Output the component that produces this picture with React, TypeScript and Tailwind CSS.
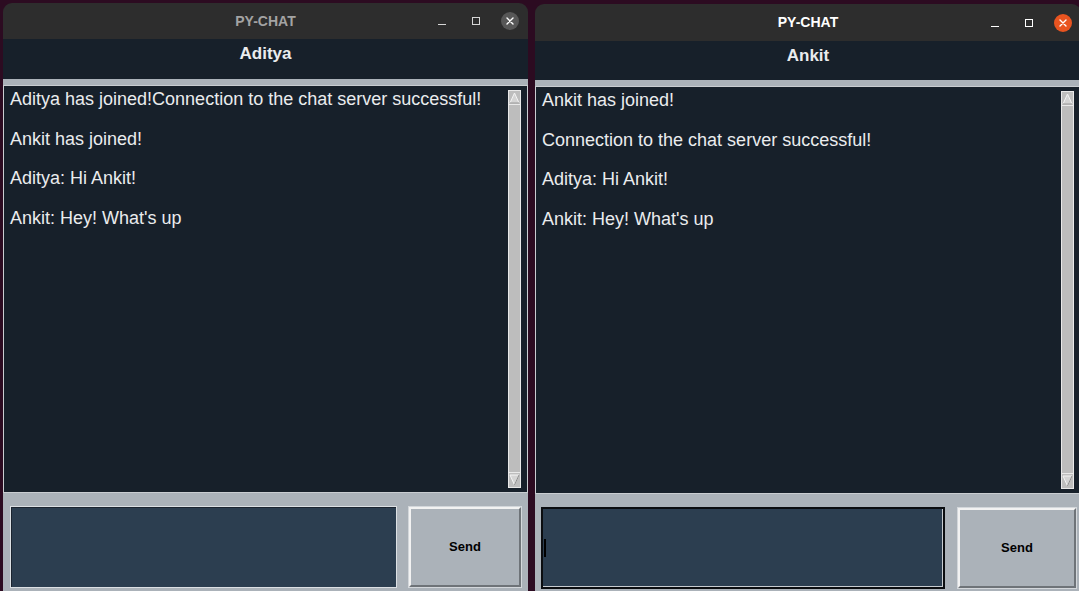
import React from "react";

const FONT = { fontFamily: '"Liberation Sans", Arial, Helvetica, sans-serif' };

function ScrollBar() {
  return (
    <div className="w-[13px] shrink-0 mt-[4px] mb-[4px] mr-[6px] flex flex-col bg-[#bebebe] border border-[#e9e9e9]">
      <div className="h-[14px] flex items-center justify-center border-b border-[#e9e9e9]">
        <svg width="11" height="12" viewBox="0 0 11 12">
          <polygon points="5.5,1 10,11 1,11" fill="#d4d4d4" stroke="#f4f4f4" strokeWidth="1" />
          <line x1="1" y1="11" x2="10" y2="11" stroke="#8a8a8a" strokeWidth="1" />
        </svg>
      </div>
      <div className="flex-1 bg-[#bdbdbd] border-b border-[#e9e9e9]" />
      <div className="h-[14px] flex items-center justify-center">
        <svg width="11" height="12" viewBox="0 0 11 12">
          <polygon points="1,1 10,1 5.5,11" fill="#d4d4d4" stroke="#f4f4f4" strokeWidth="1" />
          <line x1="5.5" y1="11" x2="10" y2="1" stroke="#8a8a8a" strokeWidth="1" />
        </svg>
      </div>
    </div>
  );
}

function TitleBar({ focused, h }: { focused: boolean; h: string }) {
  const icon = focused ? "#ffffff" : "#d6d6d6";
  return (
    <div
      className={`${h} shrink-0 bg-[#2d2d2d] rounded-t-[9px] grid grid-cols-[1fr_auto_1fr] items-center`}
    >
      <div />
      <div
        className={`text-[14px] font-bold ${focused ? "text-white" : "text-[#a3a3a3]"}`}
        style={FONT}
      >
        PY-CHAT
      </div>
      <div className="flex items-center justify-end pr-[9px]">
        <div className="w-[8px] h-[8px] flex items-end">
          <div className="w-[8px] h-[1px]" style={{ background: icon }} />
        </div>
        <div className="w-[8px] h-[8px] ml-[26px] border" style={{ borderColor: icon }} />
        <div
          className={`w-[18px] h-[18px] ml-[21px] rounded-full flex items-center justify-center ${
            focused ? "bg-[#e95420]" : "bg-[#575757]"
          }`}
        >
          <svg width="8" height="8" viewBox="0 0 8 8">
            <path d="M1 1 L7 7 M7 1 L1 7" stroke="#ffffff" strokeWidth="1.4" strokeLinecap="round" />
          </svg>
        </div>
      </div>
    </div>
  );
}

function ChatWindow({
  name,
  messages,
  focused,
  width,
  top,
  titleH,
  headerH,
  inputW,
  btnW,
  gapBtn,
  padL,
}: {
  name: string;
  messages: string[];
  focused: boolean;
  width: string;
  top: string;
  titleH: string;
  headerH: string;
  inputW: string;
  btnW: string;
  gapBtn: string;
  padL: string;
}) {
  return (
    <div className={`${width} ${top} shrink-0 h-[620px] flex flex-col`} style={FONT}>
      <TitleBar focused={focused} h={titleH} />
      <div className={`${headerH} shrink-0 bg-[#17202a] flex justify-center pt-[5px]`}>
        <div className="text-[17px] leading-[20px] font-bold text-[#eaecee]">{name}</div>
      </div>
      <div className="h-[6px] shrink-0 bg-[#abb2b9]" />
      <div className="h-[408px] shrink-0 bg-[#17202a] border border-[#c9cdd1] flex">
        <div className="flex-1 pl-[6px] pt-[4px] text-[18px] leading-[19.75px] text-[#eaecee]">
          {messages.map((m, i) => (
            <div key={i} className="h-[39.5px] whitespace-nowrap">
              {m}
            </div>
          ))}
        </div>
        <ScrollBar />
      </div>
      <div className={`flex-1 bg-[#abb2b9] flex items-start pt-[13px] ${padL}`}>
        {focused ? (
          <div className={`${inputW} h-[82px] border-2 border-[#0b0d10] bg-[#2c3e50] flex items-center`}>
            <div className="w-full h-full border-r border-b border-[#c8ccd1] flex items-center">
              <div className="w-[2px] h-[18px] bg-black ml-[1px]" />
            </div>
          </div>
        ) : (
          <div className={`${inputW} h-[82px] border border-[#dce0e4] bg-[#2c3e50]`}>
            <div className="w-full h-full border-t border-l border-[#1b2430]" />
          </div>
        )}
        <div className={`${btnW} ${gapBtn} h-[82px] border border-[#d3d7db]`}>
          <div className="w-full h-full border-t-2 border-l-2 border-r-2 border-b-2 border-t-[#f2f2f2] border-l-[#f2f2f2] border-r-[#6e7378] border-b-[#6e7378] bg-[#abb2b9] flex items-center justify-center">
            <span className="text-[13px] font-bold text-black">Send</span>
          </div>
        </div>
      </div>
    </div>
  );
}

export default function App() {
  return (
    <div className="w-[1079px] h-[591px] overflow-hidden bg-[#2c0b21] flex gap-[7px] pl-[3px]">
      <ChatWindow
        name="Aditya"
        messages={[
          "Aditya has joined!Connection to the chat server successful!",
          "Ankit has joined!",
          "Aditya: Hi Ankit!",
          "Ankit: Hey! What's up",
        ]}
        focused={false}
        width="w-[525px]"
        top="mt-[3px]"
        titleH="h-[36px]"
        headerH="h-[40px]"
        inputW="w-[387px]"
        btnW="w-[114px]"
        gapBtn="ml-[11px]"
        padL="pl-[7px]"
      />
      <ChatWindow
        name="Ankit"
        messages={[
          "Ankit has joined!",
          "Connection to the chat server successful!",
          "Aditya: Hi Ankit!",
          "Ankit: Hey! What's up",
        ]}
        focused={true}
        width="w-[546px]"
        top="mt-[4px]"
        titleH="h-[37px]"
        headerH="h-[39px]"
        inputW="w-[404px]"
        btnW="w-[120px]"
        gapBtn="ml-[12px]"
        padL="pl-[6px]"
      />
    </div>
  );
}
